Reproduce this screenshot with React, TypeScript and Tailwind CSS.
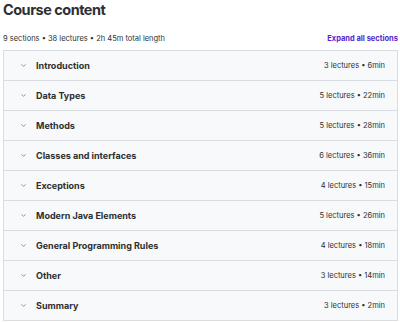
import React from "react";

const sections = [
  ["Introduction", "3 lectures • 6min"],
  ["Data Types", "5 lectures • 22min"],
  ["Methods", "5 lectures • 28min"],
  ["Classes and interfaces", "6 lectures • 36min"],
  ["Exceptions", "4 lectures • 15min"],
  ["Modern Java Elements", "5 lectures • 26min"],
  ["General Programming Rules", "4 lectures • 18min"],
  ["Other", "3 lectures • 14min"],
  ["Summary", "3 lectures • 2min"],
];

export default function App() {
  return (
    <div className="w-[400px] h-[322px] bg-white overflow-hidden pl-[3px] pr-[2px]" style={{ fontFamily: "Inter, 'Noto Sans', sans-serif" }}>
      <div className="h-[20px] flex items-center text-[14.5px] font-bold text-[#2d2f31] tracking-[-0.5px]">Course content</div>
      <div className="flex items-center justify-between h-[30px] pt-[8px]">
        <span className="text-[7.5px] text-[#2d2f31]">9 sections • 38 lectures • 2h 45m total length</span>
        <span className="text-[7.5px] font-bold text-[#5624d0]">Expand all sections</span>
      </div>
      <div className="border border-[#d9dde1] border-b-0">
        {sections.map(([t, m]) => (
          <div key={t} className="h-[30px] flex items-center bg-[#f7f9fa] border-b border-[#d9dde1] pl-[16px] pr-[12px]">
            <svg width="7" height="7" viewBox="0 0 24 24" className="mr-[9px] text-[#6a6f73]" fill="none" stroke="currentColor" strokeWidth="2.5" strokeLinecap="round" strokeLinejoin="round">
              <path d="M6 9l6 6 6-6" />
            </svg>
            <span className="flex-1 text-[9px] font-bold text-[#2d2f31]">{t}</span>
            <span className="text-[7.5px] text-[#2d2f31]">{m}</span>
          </div>
        ))}
      </div>
    </div>
  );
}
